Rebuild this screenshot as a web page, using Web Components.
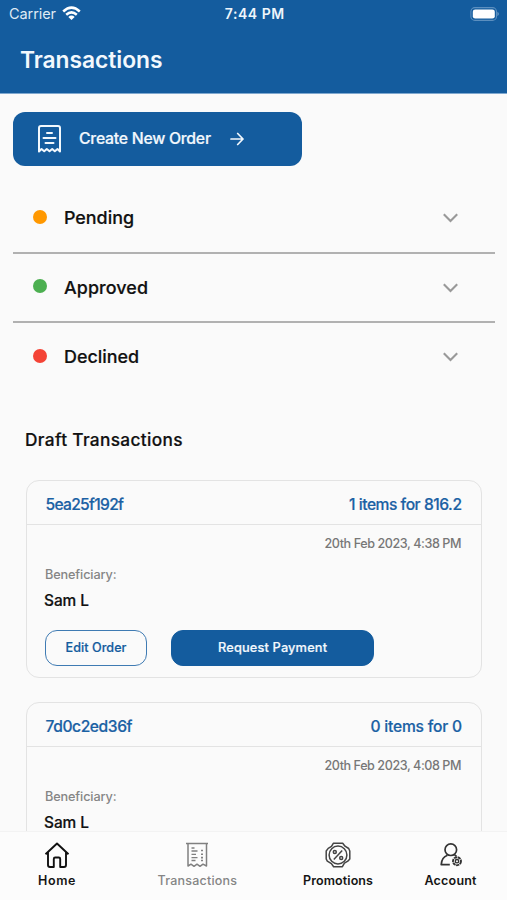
<!DOCTYPE html>
<html lang="en">
<head>
<meta charset="utf-8">
<title>Transactions</title>
<style>
html,body{margin:0;height:100%}
body{font-family:Inter,"Liberation Sans",sans-serif;font-weight:500;background:#fafafa;color:#111;overflow:hidden}
</style>
</head>
<body>
<transactions-screen></transactions-screen>
<script>
const BLUE = '#145c9e';

class BaseElement extends HTMLElement {
  constructor() { super(); this.attachShadow({mode: 'open'}); }
  connectedCallback() { this.shadowRoot.innerHTML = this.render(); }
  attr(n) { return this.getAttribute(n) || ''; }
}

/* One line of text whose tracking is adjusted to a given measure. */
class FitText extends BaseElement {
  render() {
    return `<style>:host{display:block;flex:none;white-space:nowrap;line-height:20px;height:20px;width:${this.attr('w')}px;font-size:${this.attr('size')}px}:host([tight]){line-height:16px;height:16px}:host([strong]){-webkit-text-stroke:.2px currentColor}span{display:inline-block}</style><span>${this.attr('text')}</span>`;
  }
  connectedCallback() {
    super.connectedCallback();
    const s = this.shadowRoot.querySelector('span');
    const w = s.getBoundingClientRect().width;
    s.style.letterSpacing = ((+this.attr('w') - w) / (this.attr('text').length - 1)).toFixed(3) + 'px';
  }
}
customElements.define('fit-text', FitText);

customElements.define('status-bar', class extends BaseElement {
  render() {
    return `<style>
      :host{display:grid;grid-template-columns:1fr auto 1fr;align-items:center;height:27px;padding:0 7px 0 9px;color:#fff}
      .l{display:flex;align-items:center;gap:6px;font-weight:400;color:#dfeaf4}
      .m{font-weight:600;color:#eef5fb}
      .r{justify-self:end;display:flex}
    </style>
    <div class="l"><fit-text w="47" size="14.5" text="Carrier"></fit-text>
      <svg width="19" height="15" viewBox="0 0 19 15" fill="none" stroke="#fff" stroke-width="2.5"><path d="M1.2 5.5Q9.5-2.2 17.8 5.5M4.2 8.8Q9.5 4 14.8 8.8"/><path d="M9.5 14 6.3 10.9Q9.5 8.3 12.7 10.9Z" fill="#fff" stroke="none"/></svg></div>
    <div class="m"><fit-text w="59.5" size="14" text="7:44 PM"></fit-text></div>
    <div class="r"><svg width="30" height="14" viewBox="0 0 30 14"><rect x=".9" y=".6" width="25.6" height="12.8" rx="4" fill="none" stroke="#5c8fbf" stroke-width="1.1"/><rect x="2.8" y="2.4" width="22" height="9.2" rx="2.4" fill="#fff"/><path d="M27.5 4.8Q30 7 27.5 9.2Z" fill="#7ca6cc"/></svg></div>`;
  }
});

customElements.define('app-header', class extends BaseElement {
  render() {
    return `<style>
      :host{display:block;height:93px;flex:none;background:${BLUE};color:#f2f8fd;border-bottom:1px solid #7fa8cf;box-sizing:content-box}
      .t{display:flex;align-items:center;height:66px;padding-left:20px;font-weight:600}
    </style><status-bar></status-bar><div class="t"><fit-text w="142.5" size="22.8" text="Transactions"></fit-text></div>`;
  }
});

customElements.define('create-order', class extends BaseElement {
  render() {
    return `<style>
      :host{display:flex;align-items:center;box-sizing:border-box;width:289px;height:54px;margin:18px 0 0 13px;padding-left:24px;border-radius:12px;background:${BLUE};color:#f2f8fd}
      .a{margin-left:19px}fit-text{margin-left:17px}
    </style>
    <svg width="25" height="30" viewBox="0 0 25 30" fill="none" stroke="#f2f8fd" stroke-width="2" stroke-linecap="round" stroke-linejoin="round"><path d="M2 27.5V4Q2 2 4 2H21Q23 2 23 4V27.5L20.5 25 17.8 27.3 15.2 25 12.5 27.3 9.8 25 7.2 27.3 4.5 25Z"/><path d="M10 9H15M6.5 14H18.5M8.5 19H16.5"/></svg>
    <fit-text strong w="132" size="15.8" text="Create New Order"></fit-text>
    <svg class="a" width="14" height="14" viewBox="0 0 14 14" fill="none" stroke="#f2f8fd" stroke-width="1.7" stroke-linecap="round" stroke-linejoin="round"><path d="M1 7H13M7.7 1.5 13 7 7.7 12.5"/></svg>`;
  }
});

customElements.define('status-row', class extends BaseElement {
  render() {
    return `<style>
      :host{display:flex;align-items:center;box-sizing:border-box;height:69.7px;margin:0 12.5px 0 13px;padding:0 36.5px 0 19.5px;border-bottom:2px solid #b1b1b1}
      :host([last]){border-color:transparent}
      i{width:14px;height:14px;border-radius:50%;background:${this.attr('color')};margin:0 17.5px 2.5px 0}
      svg{margin-left:auto}
    </style><i></i><fit-text strong w="${this.attr('w')}" size="17.9" text="${this.attr('label')}"></fit-text>
    <svg width="15" height="10" viewBox="0 0 15 10" fill="none" stroke="#999" stroke-width="2.1"><path d="M.8 1.2 7.5 7.9 14.2 1.2"/></svg>`;
  }
});

customElements.define('pill-button', class extends BaseElement {
  render() {
    return `<style>
      :host{display:flex;align-items:center;justify-content:center;box-sizing:border-box;height:36px;border-radius:12px;border:1.5px solid #3f7bb3;color:${BLUE}}
      :host([solid]){background:${BLUE};border-color:${BLUE};color:#f2f8fd}
    </style><slot></slot>`;
  }
});

customElements.define('order-card', class extends BaseElement {
  render() {
    const actions = this.hasAttribute('collapsed') ? '' : `<div class="f"><pill-button><fit-text strong w="61" size="12.6" text="Edit Order"></fit-text></pill-button><pill-button solid><fit-text strong w="109" size="12.8" text="Request Payment"></fit-text></pill-button></div>`;
    return `<style>
      :host{display:block;box-sizing:border-box;width:455.5px;height:198px;flex:none;margin:0 0 24px 26px;border:1.6px solid #e3e3e3;border-radius:13px}
      .h{display:flex;justify-content:space-between;align-items:center;box-sizing:border-box;height:44px;padding:5px 18.5px 0 18.5px;border-bottom:1.5px solid #e3e3e3;color:#1a61a4}
      .b{padding:9px 19px 0 18px}
      .d{display:flex;justify-content:flex-end;color:#777}
      .n{margin-top:10.5px;color:#858585}
      .s{margin:8px 0 0 -1px}
      .f{display:grid;grid-template-columns:102px 203px;gap:24px;margin-top:21px}
    </style>
    <div class="h"><fit-text strong w="${this.attr('idw')}" size="15.6" text="${this.attr('ref-id')}"></fit-text><fit-text strong w="${this.attr('sw')}" size="15.6" text="${this.attr('summary')}"></fit-text></div>
    <div class="b">
      <div class="d"><fit-text w="137" size="12.6" text="${this.attr('date')}"></fit-text></div>
      <div class="n"><fit-text w="71.5" size="12.7" text="Beneficiary:"></fit-text></div>
      <div class="s"><fit-text strong tight w="45" size="15.4" text="Sam L"></fit-text></div>
      ${actions}
    </div>`;
  }
});

const NAV_ICONS = {
  home: `<g stroke="#111" stroke-width="1.9"><path d="M1.5 12.3 13 1.5 24.5 12.3M4 10.5V23Q4 25 6 25H9.8V17Q9.8 15.5 11.2 15.5H14.8Q16.2 15.5 16.2 17V25H20Q22 25 22 23V10.5"/></g>`,
  receipt: `<g stroke="#808080" stroke-width="1.5"><path d="M2 1.5H24M4 1.5V24L7 22.2 10 24.3 13 22.2 16 24.3 19 22.2 22.5 24V1.5"/><path d="M7.5 6H10.5M7.5 9H13.5M7.5 12.3H12M7.5 15.6H13.5M7.5 18.5H11.5" stroke-width="1.3"/><path d="M17 8.5H19M17 12.3H19M17 15.6H19M17 18.5H19" stroke-width="1.6"/></g>`,
  promo: `<g stroke="#444" stroke-width="1.5"><path d="M8.3 1.3H17.7L20 4.2 23.7 6.5 24.8 9V17L22.8 19.2 19.4 21.2 17.4 24.7H8.6L6.4 21.6 2.3 19.2 1.2 17V9L3.2 6.4 6.5 4.4Z"/><circle cx="13" cy="13" r="8.9"/><path d="M17.2 8.5 8.8 17.5"/><circle cx="9.8" cy="10" r="1.5"/><circle cx="16.2" cy="16" r="1.5"/></g>`,
  account: `<g stroke="#333" stroke-width="1.7"><circle cx="12.8" cy="7.7" r="5.8"/><path d="M9.5 13.3Q3.7 15.3 3.2 22.6H11.8M16.5 13 18.5 14.3"/><circle cx="19" cy="19.2" r="4" stroke-width="1.9" stroke-dasharray="3.2 .6"/><circle cx="19" cy="19.2" r="1.7" stroke-width="1.4"/></g>`
};

customElements.define('nav-item', class extends BaseElement {
  render() {
    return `<style>
      :host{display:flex;flex:none;flex-direction:column;align-items:center;gap:3.5px;font-weight:600;color:#151515}
      :host([muted]){color:#858585;font-weight:500}
    </style><svg width="26" height="26" viewBox="0 0 26 26" fill="none" stroke-linejoin="round">${NAV_ICONS[this.attr('icon')]}</svg>
    <fit-text w="${this.attr('w')}" size="12.5" text="${this.attr('label')}"></fit-text>`;
  }
});

customElements.define('bottom-nav', class extends BaseElement {
  render() {
    return `<style>
      :host{display:flex;box-sizing:border-box;height:69px;flex:none;padding:9.5px 0 0 38px;background:#fcfcfc;border-top:1px solid #f3f3f3}
    </style>
    <nav-item icon="home" label="Home" w="37.5"></nav-item>
    <nav-item icon="receipt" label="Transactions" w="79.5" muted style="margin-left:82px"></nav-item>
    <nav-item icon="promo" label="Promotions" w="70" style="margin-left:66px"></nav-item>
    <nav-item icon="account" label="Account" w="52" style="margin-left:51.5px"></nav-item>`;
  }
});

customElements.define('transactions-screen', class extends BaseElement {
  render() {
    return `<style>
      :host{display:flex;flex-direction:column;height:900px;width:507px}
      main{flex:1;min-height:0;overflow:hidden}
      .rows{padding-top:18px}
      .title{padding:36.9px 0 30.4px 25px}
    </style>
    <app-header></app-header>
    <main>
      <create-order></create-order>
      <div class="rows">
        <status-row color="#ff9800" label="Pending" w="70"></status-row>
        <status-row color="#4caf50" label="Approved" w="84"></status-row>
        <status-row color="#f44336" label="Declined" w="75" last></status-row>
      </div>
      <div class="title"><fit-text strong w="157.5" size="17.3" text="Draft Transactions"></fit-text></div>
      <order-card ref-id="5ea25f192f" idw="78.5" summary="1 items for 816.2" sw="113" date="20th Feb 2023, 4:38 PM"></order-card>
      <order-card ref-id="7d0c2ed36f" idw="87" summary="0 items for 0" sw="91.5" date="20th Feb 2023, 4:08 PM" collapsed></order-card>
    </main>
    <bottom-nav></bottom-nav>`;
  }
});
</script>
</body>
</html>
